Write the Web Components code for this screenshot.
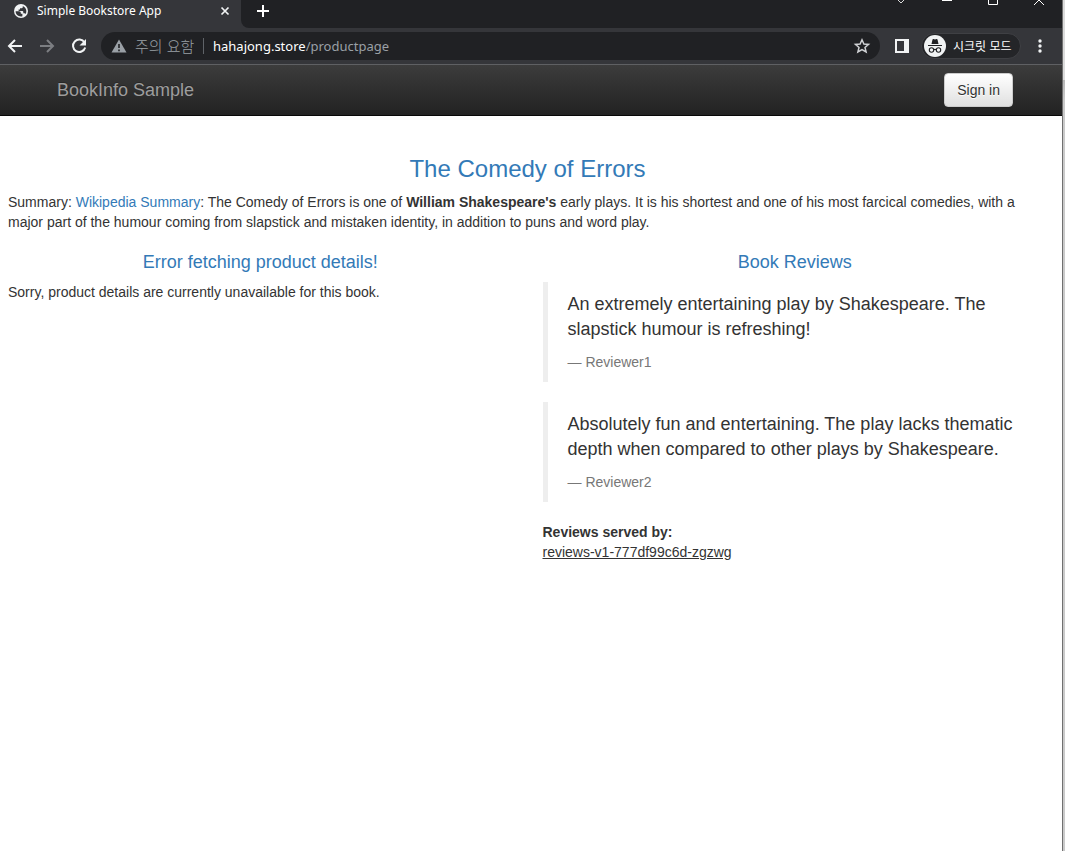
<!DOCTYPE html>
<html lang="en">
<head>
<meta charset="utf-8">
<title>Simple Bookstore App</title>
<style>
body { margin: 0; background: #fff; font: 14px/20px "Liberation Sans", Arial, sans-serif; color: #333; }
</style>
</head>
<body>
<app-window>
  <tab-strip slot="chrome">Simple Bookstore App</tab-strip>
  <browser-toolbar slot="chrome"></browser-toolbar>
  <nav-bar>BookInfo Sample</nav-bar>
  <product-page></product-page>
</app-window>

<script>
function define(name, html) {
  const template = document.createElement('template');
  template.innerHTML = html;
  customElements.define(name, class extends HTMLElement {
    constructor() {
      super();
      this.attachShadow({ mode: 'open' }).append(template.content.cloneNode(true));
    }
  });
}

define('app-window', `
<style>
:host { display: grid; grid-template-columns: minmax(0, 1fr) 3px; min-height: 100vh; }
.edge { border-left: 1px solid #707070; background: linear-gradient(#dcdcdc 80px, #b8b8b8 80px, #cacaca 100px); }
</style>
<div><header><slot name="chrome"></slot></header><main><slot></slot></main></div>
<div class="edge"></div>`);

define('tab-strip', `
<style>
:host { display: flex; height: 28px; background: #202124; color: #fff; font: 12px/20px "Noto Sans", "Noto Sans CJK KR", sans-serif; }
.strip { flex: 1; display: flex; background: #35363a; }
.tab { display: flex; width: 241px; box-sizing: border-box; padding: 1px 8px 7px 13px; align-items: center; }
.title { margin-left: 8px; flex: 1; white-space: nowrap; }
button { border: 0; background: none; padding: 0; display: block; }
svg { display: block; }
.rest { flex: 1; display: flex; justify-content: space-between; background: #202124; border-bottom-left-radius: 8px; padding-left: 14px; }
.add { height: 22px; }
.controls { display: flex; }
</style>
<div class="strip">
  <div class="tab">
    <svg width="16" height="16" viewBox="0 0 16 16"><circle cx="8" cy="8" r="7" fill="#f1f3f4"/><path d="M2.600 8.200h3.600q1.600 0 1.600 1.600v1h1.600v2.400c-3.600.9-6.800-1.600-6.800-5zM9.800 2.900v1q0 1.300-1.300 1.300H7v1.400H5.600V8h3.800q.9 0 .9.900v1.400h1.100q.9 0 1.200.8c1.600-2.800.6-6.800-2.800-8.200z" fill="#35363a"/></svg>
    <span class="title"><slot></slot></span>
    <button aria-label="Close tab"><svg width="16" height="16" viewBox="0 0 16 16"><path d="M4.500 4.500l7 7m0-7l-7 7" stroke="#f1f3f4" stroke-width="1.700"/></svg></button>
  </div>
  <div class="rest">
    <button class="add" aria-label="New tab"><svg width="16" height="22" viewBox="0 0 16 22"><path d="M8 5v12M2 11h12" stroke="#fff" stroke-width="2"/></svg></button>
    <div class="controls">
      <button aria-label="Search tabs"><svg width="46" height="28" viewBox="0 0 46 28"><path d="M19 -1l4 4 4-4" fill="none" stroke="#ddd"/></svg></button>
      <button aria-label="Minimize"><svg width="46" height="28" viewBox="0 0 46 28"><path d="M18 .5h10" stroke="#fff"/></svg></button>
      <button aria-label="Maximize"><svg width="46" height="28" viewBox="0 0 46 28"><path d="M18.500 -4.500h9v9h-9z" fill="none" stroke="#fff"/></svg></button>
      <button aria-label="Close"><svg width="46" height="28" viewBox="0 0 46 28"><path d="M18 -5l10 10m0-10L18 5" stroke="#fff"/></svg></button>
    </div>
  </div>
</div>`);

define('browser-toolbar', `
<style>
:host { display: flex; align-items: center; box-sizing: border-box; height: 37px; padding: 0 11px 0 4px; background: #35363a; border-bottom: 1px solid #5f6063; font: 13px/20px "Noto Sans", "Noto Sans CJK KR", sans-serif; }
button { border: 0; background: none; padding: 0; display: block; color: inherit; font: inherit; }
svg { display: block; }
.nav { margin-right: 10px; }
.address { flex: 1; display: flex; align-items: center; height: 28px; margin: 0 10px 0 1px; padding: 0 7px; border-radius: 14px; background: #202124; color: #9aa0a6; white-space: nowrap; }
.warn { margin-left: 5px; width: 61px; font: 300 15px/20px "Noto Sans CJK KR", sans-serif; }
.bar { width: 1px; height: 16px; margin: 0 9px 0 7px; background: #5f6368; }
.url { flex: 1; }
b { font-weight: 400; color: #fff; }
.profile { display: flex; align-items: center; box-sizing: border-box; width: 100px; height: 26px; margin: 0 8px 0 10px; padding: 0 0 0 2px; border-radius: 13px; background: #242528; border: 1px solid #3f4044; color: #fff; font: 12px/20px "Noto Sans CJK KR", sans-serif; white-space: nowrap; }
.profile svg { margin-right: 7px; }
</style>
<button class="nav" aria-label="Back"><svg width="22" height="22" viewBox="0 0 22 22"><path d="M18 11H5m6-6l-6 6 6 6" fill="none" stroke="#f1f3f4" stroke-width="2"/></svg></button>
<button class="nav" aria-label="Forward"><svg width="22" height="22" viewBox="0 0 22 22"><path d="M4 11h13m-6-6l6 6-6 6" fill="none" stroke="#7c7e82" stroke-width="2"/></svg></button>
<button class="nav" aria-label="Reload"><svg width="22" height="22" viewBox="0 0 22 22"><path d="M16.500 7.500A6.200 6.200 0 1 0 17.200 12.500" fill="none" stroke="#f1f3f4" stroke-width="2"/><path d="M18 4v6.500h-6.500z" fill="#f1f3f4"/></svg></button>
<div class="address">
  <svg width="22" height="20" viewBox="0 0 22 20"><path d="M11 3.500l7.500 13h-15z" fill="#9aa0a6"/><path d="M11 8v4m0 1.500v1.800" stroke="#202124" stroke-width="1.600"/></svg>
  <span class="warn" lang="ko">주의 요함</span><span class="bar"></span>
  <span class="url"><b>hahajong.store</b>/productpage</span>
  <button aria-label="Bookmark"><svg width="22" height="22" viewBox="0 0 22 22"><path d="M11 4.800l1.900 4.200 4.600.4-3.500 3 1.100 4.500-4.100-2.400-4.100 2.400L8 12.400l-3.500-3 4.600-.4z" fill="none" stroke="#d0d2d5" stroke-width="1.500"/></svg></button>
</div>
<button aria-label="Side panel"><svg width="21" height="22" viewBox="0 0 21 22"><path d="M5 4h14v14H5zM7 6v10h7V6z" fill="#f1f3f4" fill-rule="evenodd"/></svg></button>
<button class="profile"><svg width="22" height="22" viewBox="0 0 22 22"><circle cx="11" cy="11" r="11" fill="#f1f3f4"/><path d="M7.500 9l1-4.500q.2-.6 1-.4l1.500.4 1.500-.4q.8-.2 1 .4l1 4.500zM4 10h14v1H4z" fill="#202124"/><g fill="none" stroke="#202124" stroke-width="1.100"><circle cx="7.500" cy="15" r="2.200"/><circle cx="14.500" cy="15" r="2.200"/><path d="M9.700 14.800q1.300-.9 2.600 0"/></g></svg><span lang="ko">시크릿 모드</span></button>
<button aria-label="Menu"><svg width="22" height="22" viewBox="0 0 22 22"><g fill="#f1f3f4"><circle cx="11" cy="6" r="1.700"/><circle cx="11" cy="11" r="1.700"/><circle cx="11" cy="16" r="1.700"/></g></svg></button>`);

define('nav-bar', `
<style>
:host { display: flex; align-items: center; justify-content: space-between; box-sizing: border-box; height: 51px; padding: 0 49px 0 57px; background: linear-gradient(#3c3c3c, #222); border-bottom: 1px solid #080808; }
a { color: #9d9d9d; font-size: 18px; line-height: 20px; text-decoration: none; text-shadow: 0 -1px 0 rgba(0,0,0,.25); }
button { height: 34px; padding: 6px 12px; border: 1px solid #ccc; border-radius: 4px; background: linear-gradient(#fff, #e0e0e0); color: #333; font: inherit; text-shadow: 0 1px 0 #fff; box-shadow: inset 0 1px 0 rgba(255,255,255,.15), 0 1px 1px rgba(0,0,0,.075); }
</style>
<a href="#"><slot></slot></a><button type="button">Sign in</button>`);

define('book-review', `
<style>
:host { display: block; margin-bottom: 20px; }
blockquote { margin: 0; padding: 10px 20px; border-left: 5px solid #eee; font-size: 18px; line-height: 25px; }
p { margin: 0 0 10px; }
footer { color: #777; font-size: 14px; line-height: 20px; }
</style>
<blockquote><p><slot></slot></p><footer>— <slot name="by"></slot></footer></blockquote>`);

define('product-page', `
<style>
:host { display: block; padding: 40px 15px 20px 8px; }
h3, h4 { margin: 0 0 10px; text-align: center; color: #337ab7; font-weight: 400; }
h3 { font-size: 24px; line-height: 26px; }
h4 { font-size: 18px; line-height: 20px; margin-top: 10px; }
p { margin: 0 0 10px; }
a { color: #337ab7; text-decoration: none; }
.cols { display: grid; grid-template-columns: 1fr 1fr; column-gap: 30px; }
dl, dt, dd { margin: 0; }
dt { font-weight: 700; }
</style>
<h3>The Comedy of Errors</h3>
<p>Summary: <a href="#">Wikipedia Summary</a>: The Comedy of Errors is one of <b>William Shakespeare's</b> early plays. It is his shortest and one of his most farcical comedies, with a major part of the humour coming from slapstick and mistaken identity, in addition to puns and word play.</p>
<div class="cols">
  <section><h4>Error fetching product details!</h4><p>Sorry, product details are currently unavailable for this book.</p></section>
  <section><h4>Book Reviews</h4>
    <book-review>An extremely entertaining play by Shakespeare. The slapstick humour is refreshing!<span slot="by">Reviewer1</span></book-review>
    <book-review>Absolutely fun and entertaining. The play lacks thematic depth when compared to other plays by Shakespeare.<span slot="by">Reviewer2</span></book-review>
    <dl><dt>Reviews served by:</dt><dd><u>reviews-v1-777df99c6d-zgzwg</u></dd></dl>
  </section>
</div>`);
</script>
</body>
</html>
